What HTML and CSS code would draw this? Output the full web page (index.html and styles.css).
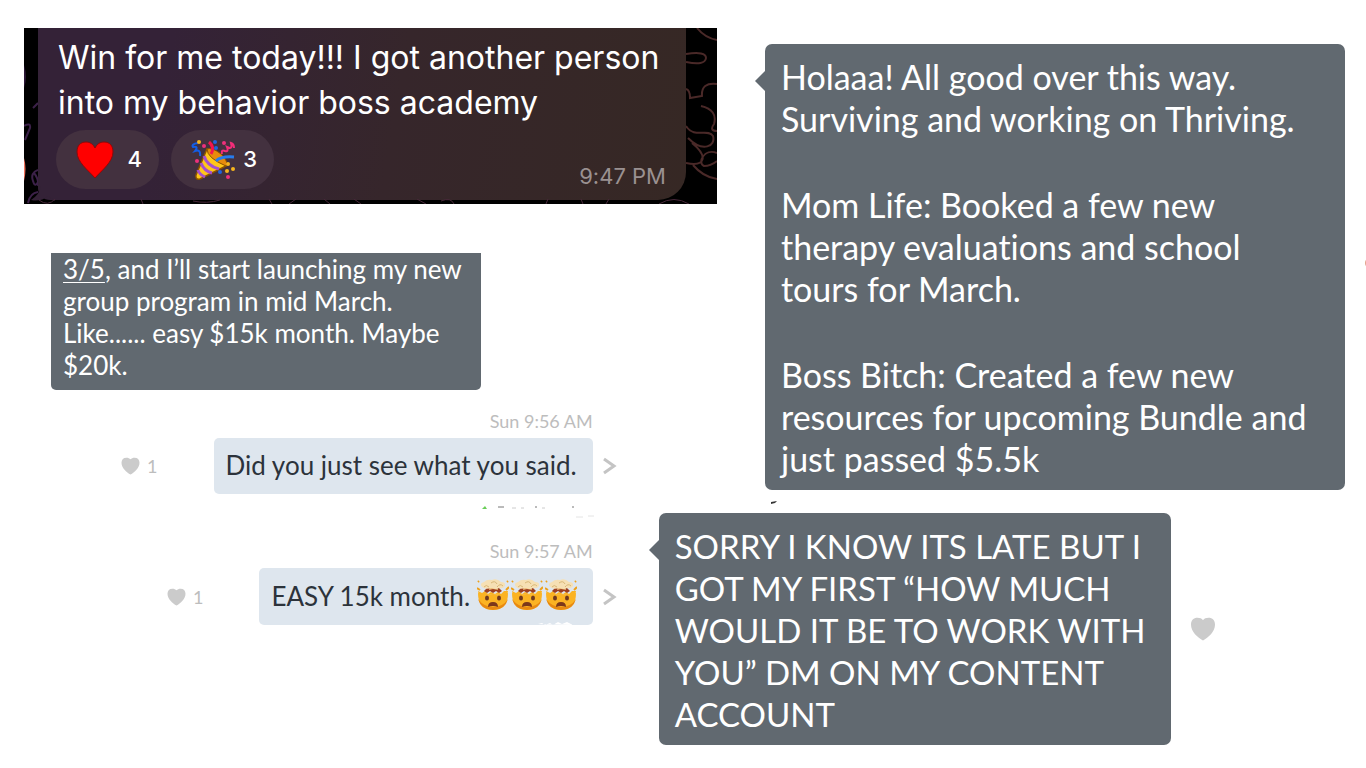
FILE: index.html
```
<!DOCTYPE html>
<html lang="en">
<head>
  <meta charset="utf-8">
  <title>Wins</title>
  <link rel="stylesheet" href="styles.css">
</head>
<body>
  <svg class="defs" aria-hidden="true">
    <symbol id="like" viewBox="0 0 24 23">
      <path d="M12 22.500C7 20 .5 14 .5 7.500C.5 3 3 .8 6.700 .8C9 .8 10.800 1.500 12 3C13.200 1.500 15 .8 17.300 .8C21 .8 23.500 3 23.500 7.500C23.500 14 17 20 12 22.500Z" fill="#cbcbcb"/>
    </symbol>
    <symbol id="chevron" viewBox="0 0 14 18">
      <path d="M1 2L11 9L1 16" fill="none" stroke="#c4c4c4" stroke-width="3"/>
    </symbol>
    <symbol id="mindblown" viewBox="0 0 32 32">
      <path d="M1 14Q1 31 16 31Q31 31 31 14Q23 17 16 15Q8 17 1 14Z" fill="#fbb323"/>
      <path d="M1 20Q4 31 16 31Q28 31 31 20Q26 28 16 28Q7 28 1 20Z" fill="#e88a12"/>
      <path d="M1 12L5 14L8 12L11 15L14 13L18 15L21 13L24 15L27 12L31 12L30 17Q16 14 2 17Z" fill="#fbb323"/>
      <path d="M7 12L11 8H21L25 12L22 14L19 12L16 14L13 12L10 14Z" fill="#9c3e20"/>
      <path d="M12 11L13 7H20L21 11L16 10Z" fill="#edbd79"/>
      <path d="M5 8Q2 4 7 3Q10 0 15 1Q20-1 24 3Q29 3 28 7Q26 10 22 9Q19 11 15 9Q8 11 5 8Z" fill="#f6e0b4"/>
      <path d="M7 8Q9 5 12 8M14 4Q18 1 20 5M20 8Q23 4 26 7" fill="none" stroke="#d8b777" stroke-width="1"/>
      <ellipse cx="10" cy="19" rx="2" ry="2.500" fill="#70391e"/><ellipse cx="22" cy="19" rx="2" ry="2.500" fill="#70391e"/>
      <path d="M11 28Q11 23 16 23Q21 23 21 28Q16 26 11 28Z" fill="#7b381b"/>
      <path d="M1 3L2 2M0 9L3 11M30 3L31 2M32 8L29 11" stroke="#eda11c" stroke-width="2"/>
    </symbol>
  </svg>

  <main class="board">
    <!-- group chat -->
    <section class="group-chat">
      <svg class="wallpaper left" viewBox="0 0 14 176" aria-hidden="true">
        <path d="M0 37Q4 49 0 60Z" fill="#2b1735"/>
        <path d="M0 130Q3 140 0 153Z" fill="#f1735c"/>
        <path d="M9 80L14 75M0 98Q7 94 6 100L1 112M14 142Q6 145 9 153Q11 160 14 154M10 145Q15 151 14 158M4 175Q6 165 14 164" fill="none" stroke="#3c2149" stroke-width="2"/>
      </svg>
      <svg class="bubble-tail" viewBox="0 0 24 16" aria-hidden="true">
        <path d="M10 0Q9 8 0 14Q10 16 17 10L24 15V0Z" fill="#342237"/>
      </svg>
      <div class="group-bubble">
        <p>Win for me today!!! I got another person<br>into my behavior boss academy</p>
        <div class="reactions">
          <button class="reaction" type="button" aria-label="Heart, 4">
            <svg width="38" height="38" viewBox="0 0 38 38"><path d="M19 37C12 29 1 21 1 11C1 5 4 1 10 1C14 1 17 3 19 7C21 3 24 1 28 1C34 1 37 5 37 11C37 21 26 29 19 37Z" fill="#f00" stroke="#8f0808"/></svg>
            <span>4</span>
          </button>
          <button class="reaction" type="button" aria-label="Party popper, 3">
            <svg width="44" height="42" viewBox="0 0 44 42">
              <path d="M16 10Q23 12 35 27L9 40Q4 41 5 36Z" fill="#ffc719" stroke="#8b5200" stroke-width="1.500"/>
              <path d="M16 10Q16 19 35 27Q38 23 30 15Q21 8 16 10Z" fill="#e78b0c" stroke="#8b5200"/>
              <path d="M13 17Q16 27 28 30M10 24Q13 32 21 34M7 31Q8 35 14 38" fill="none" stroke="#a550cc" stroke-width="3"/>
              <path d="M18 3Q24 8 20 15" fill="none" stroke="#f2154e" stroke-width="3"/>
              <path d="M25 22Q30 17 43 18" fill="none" stroke="#277cec" stroke-width="3"/>
              <path d="M7 4Q0 5 2 8Q8 7 4 12Q10 10 9 17" fill="none" stroke="#145ee6" stroke-width="2"/>
              <path d="M31 15Q30 10 34 12Q38 13 36 8Q42 11 40 4Q43 5 43 9" fill="none" stroke="#f32d79" stroke-width="2"/>
              <g fill="#1f65dd"><circle cx="24" cy="3" r="2"/><circle cx="25" cy="9" r="2"/><circle cx="29" cy="33" r="2"/></g>
              <g fill="#ed317b"><circle cx="13" cy="7" r="2"/><circle cx="33" cy="4" r="2"/><circle cx="6" cy="22" r="2"/><circle cx="37" cy="38" r="2"/></g>
              <g fill="#f7b51d"><circle cx="8" cy="3" r="2"/><circle cx="37" cy="25" r="2"/><circle cx="36" cy="32" r="2"/><circle cx="42" cy="30" r="2"/></g>
            </svg>
            <span>3</span>
          </button>
          <time>9:47 PM</time>
        </div>
      </div>
      <svg class="wallpaper right" viewBox="0 0 31 176" aria-hidden="true">
        <path d="M11 0Q19 10 31 12M0 26Q20 23 20 30Q19 38 0 34M0 61Q4 62 4 70L16 68Q15 54 31 56M15 78Q32 82 28 96Q23 103 31 103M0 98C8 111 22 100 27 108C30 118 17 125 2 110M6 115C22 128 20 139 0 135M31 125C18 120 11 135 18 138Q25 138 31 133M7 137Q17 149 31 151" fill="none" stroke="#4a2928" stroke-width="2"/>
      </svg>
      <svg class="wallpaper bottom" viewBox="0 0 693 5" preserveAspectRatio="none" aria-hidden="true">
        <path d="M15 1Q24 8 31 0M117 0L119 5M169 2Q183 5 196 1M245 0L248 5M265 5L272 0M300 0L306 5M330 0L337 5M393 0L402 5M417 2Q427-2 430 5M522 5L524 0M557 0L559 5M582 5L585 0M635 5Q650-4 665 5" fill="none" stroke="#48283a" stroke-width="1"/>
      </svg>
    </section>

    <!-- private thread -->
    <section class="thread">
      <div class="bubble dark cropped">
        <p><a href="#">3/5</a>, and I’ll start launching my new<br>group program in mid March.<br>Like...... easy $15k month. Maybe<br>$20k.</p>
      </div>
      <div class="message">
        <time>Sun 9:56 AM</time>
        <div class="message-row">
          <button class="like" type="button" aria-label="Like"><svg><use href="#like"/></svg><span>1</span></button>
          <p class="bubble light">Did you just see what you said.</p>
          <button class="more" type="button" aria-label="Open message"><svg><use href="#chevron"/></svg></button>
        </div>
      </div>
      <div class="message">
        <svg class="receipt" viewBox="0 0 120 16" aria-hidden="true">
          <path d="M6 5L9 2L11 5Z" fill="#69ce58"/>
          <path d="M22 3H28M59 3H61M96 3H98" stroke="#777" stroke-width="1"/>
          <path d="M36 4H40M45 4H48M66 4H69" stroke="#ccc" stroke-width="1"/>
          <path d="M100 13H107M112 12H118" stroke="#e4e4e4" stroke-width="1"/>
        </svg>
        <time>Sun 9:57 AM</time>
        <div class="message-row">
          <button class="like" type="button" aria-label="Like"><svg><use href="#like"/></svg><span>1</span></button>
          <p class="bubble light">EASY 15k month. <span class="emoji"><svg><use href="#mindblown"/></svg><svg><use href="#mindblown"/></svg><svg><use href="#mindblown"/></svg></span></p>
          <button class="more" type="button" aria-label="Open message"><svg><use href="#chevron"/></svg></button>
        </div>
        <svg class="smudge" viewBox="0 0 36 4" aria-hidden="true">
          <path d="M0 3L4 2L7 4L12 2L15 4L20 1L24 3L29 1L35 4Z" fill="#fff"/>
        </svg>
      </div>
    </section>

    <section class="update">
      <div class="bubble dark large tail">
        <p>Holaaa! All good over this way.<br>Surviving and working on Thriving.</p>
        <p>Mom Life: Booked a few new<br>therapy evaluations and school<br>tours for March.</p>
        <p>Boss Bitch: Created a few new<br>resources for upcoming Bundle and<br>just passed $5.5k</p>
      </div>
      <span class="edge-dot"></span>
    </section>

    <section class="late-win">
      <svg class="speck" viewBox="0 0 6 4" aria-hidden="true"><path d="M0 1L6 0L4 2L0 3Z" fill="#333"/></svg>
      <div class="bubble dark large tail">
        <p>SORRY I KNOW ITS LATE BUT I<br>GOT MY FIRST “HOW MUCH<br>WOULD IT BE TO WORK WITH<br>YOU” DM ON MY CONTENT<br>ACCOUNT</p>
      </div>
      <button class="like big" type="button" aria-label="Like"><svg><use href="#like"/></svg></button>
    </section>
  </main>
</body>
</html>
```
FILE: styles.css
```
* {
  box-sizing: border-box;
}

body {
  margin: 0;
  background: #fff;
  font-family: Lato, "Liberation Sans", sans-serif;
  font-variant-ligatures: none;
  overflow-x: hidden;
}

p {
  margin: 0;
  white-space: nowrap;
}

button {
  border: none;
  background: none;
  padding: 0;
  font: inherit;
  cursor: pointer;
}

.defs {
  position: absolute;
  width: 0;
  height: 0;
}

.board {
  display: grid;
  grid-template-columns: 48% 5% 1fr;
  align-items: start;
}

/* ---------- group chat ---------- */
.group-chat {
  grid-area: 1 / 1 / 2 / 3;
  position: relative;
  margin: 28px 7px 0 24px;
  padding: 0 31px 4px 14px;
  background: #000;
  font-family: Inter, "Liberation Sans", sans-serif;
  overflow: hidden;
}

.group-bubble {
  padding: 7px 20px 11px;
  border-radius: 0 0 28px 12px;
  background: linear-gradient(100deg, #342237 20%, #36262b 55%, #362824);
  color: #fff;
  font-size: 32px;
  line-height: 45px;
}

.bubble-tail {
  position: absolute;
  bottom: 2px;
  left: 7px;
  width: 24px;
  height: 16px;
}

.reactions {
  display: flex;
  gap: 12px;
  margin: 5px 0 0 -2px;
}

.reaction {
  display: flex;
  align-items: center;
  justify-content: space-between;
  width: 103px;
  height: 59px;
  padding: 0 17px 0 20px;
  border-radius: 30px;
  background: #43313f;
  color: #fff;
  font-size: 22px;
  font-weight: 500;
}

.reactions time {
  align-self: flex-end;
  margin: 0 0 1px auto;
  color: #9a9191;
  font-size: 22px;
  line-height: 24px;
}

.wallpaper {
  position: absolute;
}

.wallpaper.left {
  top: 0;
  left: 0;
  width: 14px;
  height: 176px;
}

.wallpaper.right {
  top: 0;
  right: 0;
  width: 31px;
  height: 176px;
}

.wallpaper.bottom {
  bottom: 0;
  left: 0;
  width: 100%;
  height: 5px;
}

/* ---------- bubbles ---------- */
.bubble {
  border-radius: 5px;
  font-size: 26px;
  line-height: 32px;
}

.bubble.dark {
  background: #616970;
  color: #fff;
}

.bubble.dark a {
  color: inherit;
  text-decoration-thickness: 1px;
  text-underline-offset: 3px;
}

.bubble.light {
  padding: 11px 16px 13px 12px;
  background: #dee6ee;
  color: #2c333b;
}

.bubble.cropped {
  width: 430px;
  padding: 0 12px 9px;
  border-radius: 0 0 5px 5px;
}

.bubble.large {
  padding: 12px 16px 10px;
  border-radius: 7px;
  font-size: 34px;
  line-height: 42px;
}

.bubble.large p + p {
  margin-top: 44px;
}

.tail {
  position: relative;
}

.tail::before {
  content: "";
  position: absolute;
  top: 27px;
  left: -10px;
  border: 10px solid transparent;
  border-right-color: #616970;
  border-left: none;
}

/* ---------- thread ---------- */
.thread {
  grid-area: 2 / 1 / 4 / 2;
  margin: 49px 39px 0 51px;
}

.message {
  position: relative;
  margin-top: 20px;
}

.message + .message {
  margin-top: 46px;
}

.message time {
  display: block;
  margin-right: 24px;
  color: #bdbdbd;
  font-size: 18px;
  line-height: 22px;
  text-align: right;
}

.message-row {
  display: flex;
  align-items: center;
  justify-content: flex-end;
  margin-top: 6px;
}

.like {
  display: flex;
  align-items: center;
  gap: 7px;
  margin-right: 56px;
  color: #bdbdbd;
  font-size: 18px;
}

.like svg {
  width: 19px;
  height: 18px;
}

.more {
  display: flex;
  margin-left: 10px;
}

.more svg {
  width: 14px;
  height: 18px;
}

.emoji {
  display: inline-flex;
  gap: 2px;
  vertical-align: -5px;
}

.emoji svg {
  width: 32px;
  height: 32px;
}

.receipt {
  position: absolute;
  top: -36px;
  right: 21px;
  width: 120px;
  height: 16px;
}

.smudge {
  position: absolute;
  bottom: 0;
  right: 43px;
  width: 36px;
  height: 4px;
}

/* ---------- right side ---------- */
.update {
  grid-area: 1 / 3 / 3 / 4;
  position: relative;
  padding: 44px 21px 0 41px;
}

.edge-dot {
  position: absolute;
  top: 258px;
  right: -7px;
  width: 8px;
  height: 10px;
  border-radius: 50%;
  background: #e2a48c;
}

.late-win {
  grid-area: 3 / 2 / 4 / 4;
  position: relative;
  display: flex;
  align-items: center;
  padding: 23px 0 0 3px;
}

.late-win .bubble {
  width: 512px;
  font-size: 33px;
}

.speck {
  position: absolute;
  top: 11px;
  left: 115px;
  width: 6px;
  height: 4px;
}

.like.big {
  margin: 0 0 0 19px;
}

.like.big svg {
  width: 26px;
  height: 24px;
}
```
